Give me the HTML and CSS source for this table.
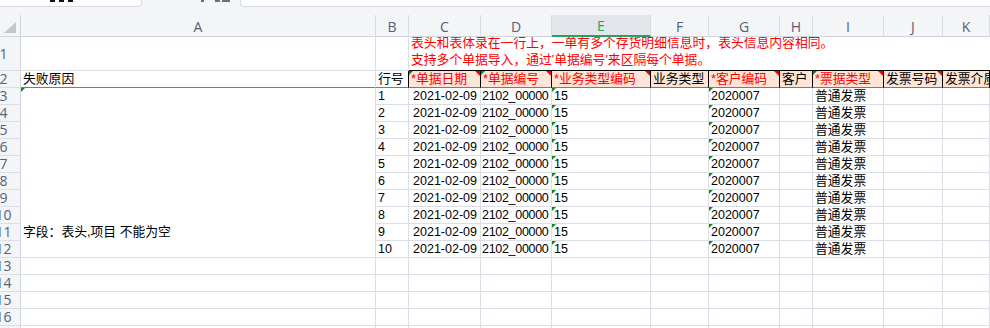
FILE: index.html
```html
<!DOCTYPE html>
<html lang="zh-CN">
<head>
<meta charset="utf-8">
<title>导入失败</title>
<link rel="stylesheet" href="styles.css">
</head>
<body>
<div class="tabs">
  <div class="tab tab-left"><span class="mk"></span><span class="mk"></span><span class="mk"></span></div>
  <div class="tab-mid"><span class="mg m1"></span><span class="mg m2"></span><span class="mg m3"></span></div>
  <div class="tab tab-right"></div>
</div>
<div class="band"></div>
<div class="sheet">
  <div class="corner"><span class="tri"></span></div>
  <div class="ch">A</div><div class="ch">B</div><div class="ch">C</div><div class="ch">D</div><div class="ch sel">E</div><div class="ch">F</div><div class="ch">G</div><div class="ch">H</div><div class="ch">I</div><div class="ch">J</div><div class="ch">K</div>

  <div class="rh"><span>1</span></div>
  <div class="c"></div><div class="c"></div>
  <div class="c note"><div>表头和表体录在一行上，一单有多个存货明细信息时，表头信息内容相同。</div><div>支持多个单据导入，通过'单据编号'来区隔每个单据。</div></div>

  <div class="rh"><span>2</span></div>
  <div class="c fz zh">失败原因</div>
  <div class="c fz zh bk">行号</div>
  <div class="c fz zh h r tl tr">*单据日期</div>
  <div class="c fz zh h r tl tr">*单据编号</div>
  <div class="c fz zh h r tr">*业务类型编码</div>
  <div class="c fz zh h">业务类型</div>
  <div class="c fz zh h r tr">*客户编码</div>
  <div class="c fz zh h">客户</div>
  <div class="c fz zh h r tl tr">*票据类型</div>
  <div class="c fz zh h tr">发票号码</div>
  <div class="c fz zh h">发票介质</div>

  <div class="rh"><span>3</span></div>
  <div class="c zh amerge tl">字段：表头,项目 不能为空</div>
  <div class="c">1</div><div class="c num">2021-02-09</div><div class="c id">2102_00000</div><div class="c tl">15</div><div class="c"></div><div class="c tl">2020007</div><div class="c"></div><div class="c zh">普通发票</div><div class="c"></div><div class="c"></div>

  <div class="rh"><span>4</span></div>
  <div class="c">2</div><div class="c num">2021-02-09</div><div class="c id">2102_00000</div><div class="c tl">15</div><div class="c"></div><div class="c tl">2020007</div><div class="c"></div><div class="c zh">普通发票</div><div class="c"></div><div class="c"></div>

  <div class="rh"><span>5</span></div>
  <div class="c">3</div><div class="c num">2021-02-09</div><div class="c id">2102_00000</div><div class="c tl">15</div><div class="c"></div><div class="c tl">2020007</div><div class="c"></div><div class="c zh">普通发票</div><div class="c"></div><div class="c"></div>

  <div class="rh"><span>6</span></div>
  <div class="c">4</div><div class="c num">2021-02-09</div><div class="c id">2102_00000</div><div class="c tl">15</div><div class="c"></div><div class="c tl">2020007</div><div class="c"></div><div class="c zh">普通发票</div><div class="c"></div><div class="c"></div>

  <div class="rh"><span>7</span></div>
  <div class="c">5</div><div class="c num">2021-02-09</div><div class="c id">2102_00000</div><div class="c tl">15</div><div class="c"></div><div class="c tl">2020007</div><div class="c"></div><div class="c zh">普通发票</div><div class="c"></div><div class="c"></div>

  <div class="rh"><span>8</span></div>
  <div class="c">6</div><div class="c num">2021-02-09</div><div class="c id">2102_00000</div><div class="c tl">15</div><div class="c"></div><div class="c tl">2020007</div><div class="c"></div><div class="c zh">普通发票</div><div class="c"></div><div class="c"></div>

  <div class="rh"><span>9</span></div>
  <div class="c">7</div><div class="c num">2021-02-09</div><div class="c id">2102_00000</div><div class="c tl">15</div><div class="c"></div><div class="c tl">2020007</div><div class="c"></div><div class="c zh">普通发票</div><div class="c"></div><div class="c"></div>

  <div class="rh"><span>10</span></div>
  <div class="c">8</div><div class="c num">2021-02-09</div><div class="c id">2102_00000</div><div class="c tl">15</div><div class="c"></div><div class="c tl">2020007</div><div class="c"></div><div class="c zh">普通发票</div><div class="c"></div><div class="c"></div>

  <div class="rh"><span>11</span></div>
  <div class="c">9</div><div class="c num">2021-02-09</div><div class="c id">2102_00000</div><div class="c tl">15</div><div class="c"></div><div class="c tl">2020007</div><div class="c"></div><div class="c zh">普通发票</div><div class="c"></div><div class="c"></div>

  <div class="rh"><span>12</span></div>
  <div class="c">10</div><div class="c num">2021-02-09</div><div class="c id">2102_00000</div><div class="c tl">15</div><div class="c"></div><div class="c tl">2020007</div><div class="c"></div><div class="c zh">普通发票</div><div class="c"></div><div class="c"></div>

  <div class="rh"><span>13</span></div>
  <div class="c"></div><div class="c"></div><div class="c"></div><div class="c"></div><div class="c"></div><div class="c"></div><div class="c"></div><div class="c"></div><div class="c"></div><div class="c"></div><div class="c"></div>

  <div class="rh"><span>14</span></div>
  <div class="c"></div><div class="c"></div><div class="c"></div><div class="c"></div><div class="c"></div><div class="c"></div><div class="c"></div><div class="c"></div><div class="c"></div><div class="c"></div><div class="c"></div>

  <div class="rh"><span>15</span></div>
  <div class="c"></div><div class="c"></div><div class="c"></div><div class="c"></div><div class="c"></div><div class="c"></div><div class="c"></div><div class="c"></div><div class="c"></div><div class="c"></div><div class="c"></div>

  <div class="rh"><span>16</span></div>
  <div class="c"></div><div class="c"></div><div class="c"></div><div class="c"></div><div class="c"></div><div class="c"></div><div class="c"></div><div class="c"></div><div class="c"></div><div class="c"></div><div class="c"></div>

  <div class="rh"><span>17</span></div>
  <div class="c"></div><div class="c"></div><div class="c"></div><div class="c"></div><div class="c"></div><div class="c"></div><div class="c"></div><div class="c"></div><div class="c"></div><div class="c"></div><div class="c"></div>
</div>
</body>
</html>
```

FILE: styles.css
```css
* { box-sizing: border-box; margin: 0; padding: 0; }
html, body { width: 990px; height: 328px; overflow: hidden; background: #fff; }
body { font-family: "Liberation Sans", "Noto Sans CJK SC", sans-serif; font-size: 12.5px; color: #000; }

.tabs { display: flex; height: 7px; background: #f4f5f7; }
.tab { background: #fff; border-bottom: 1px solid #d6dae2; display: flex; align-items: flex-start; }
.tab-left { width: 142px; border-right: 1px solid #d6dae2; border-bottom-right-radius: 4px; padding-left: 50px; gap: 4px; }
.tab-mid { width: 98px; display: flex; align-items: flex-start; padding-left: 59px; }
.tab-right { flex: 1; border-left: 1px solid #d6dae2; border-bottom-left-radius: 4px; }
.mk { width: 5px; height: 2px; background: #111; }
.mg { height: 2px; background: #6a6f78; }
.m1 { width: 3px; }
.m2 { width: 5px; margin-left: 11px; }
.m3 { width: 8px; margin-left: 2px; }

.band { height: 8px; background: #f4f5f7; }

.sheet {
  display: grid;
  grid-template-columns: 21px 355px 33px 72px 71px 99px 58px 71px 33px 71px 59px 1fr;
  grid-template-rows: 22px 34px 17px repeat(15, 17px);
}

.corner { background: #f4f5f7; border-right: 1px solid #d0d6e0; border-bottom: 1px solid #d0d6e0; display: flex; justify-content: flex-end; align-items: flex-end; padding: 0 4px 3px 0; }
.tri { width: 0; height: 0; border-bottom: 11px solid #c4c8ce; border-left: 12px solid transparent; }

.ch { position: relative; z-index: 1; background: #f4f5f7; border-right: 1px solid #d6dbe4; border-bottom: 1px solid #d0d6e0; display: flex; align-items: center; justify-content: center; font-family: "Open Sans", "Liberation Sans", sans-serif; font-size: 14px; color: #55607a; padding-top: 1px; }
.ch.sel { background: #e3e6eb; color: #1fa463; border-bottom: 2px solid #1fa463; }

.rh { background: #f4f5f7; border-right: 1px solid #d0d6e0; border-bottom: 1px solid #d9dee7; display: flex; align-items: center; overflow: hidden; font-family: "Open Sans", "Liberation Sans", sans-serif; font-size: 14px; color: #55607a; }
.rh span { flex: 0 0 40px; margin-left: -16.5px; text-align: center; line-height: 16px; }

.c { position: relative; background: #fff; border-right: 1px solid #dadee7; border-bottom: 1px solid #dadee7; padding: 0 2px; line-height: 16px; white-space: nowrap; overflow: hidden; display: flex; align-items: flex-end; }
.zh { font-size: 12.8px; }
.num { justify-content: flex-end; padding-right: 3px; }
.id { letter-spacing: -0.3px; padding-left: 1px; }
.fz { border-bottom-color: #3a9f69; }
.bk { border-right-color: #000; }
.h { background: #fce4d6; border-right-color: #000; }
.r { color: #f00; }

.note { grid-column: span 9; display: flex; flex-direction: column; justify-content: flex-end; align-items: flex-start; overflow: visible; color: #f00; font-size: 12.8px; line-height: 17px; padding: 0 0 2.5px 2px; border-bottom-color: #000; border-right: none; }

.amerge { grid-row: span 10; padding-bottom: 17px; }

.tl::before { content: ""; position: absolute; top: 0; left: 0; width: 0; height: 0; border-top: 4px solid #0a8a1e; border-right: 4px solid transparent; }
.tr::after { content: ""; position: absolute; top: 0; right: 0; width: 0; height: 0; border-top: 5px solid #f00; border-left: 5px solid transparent; }
```
